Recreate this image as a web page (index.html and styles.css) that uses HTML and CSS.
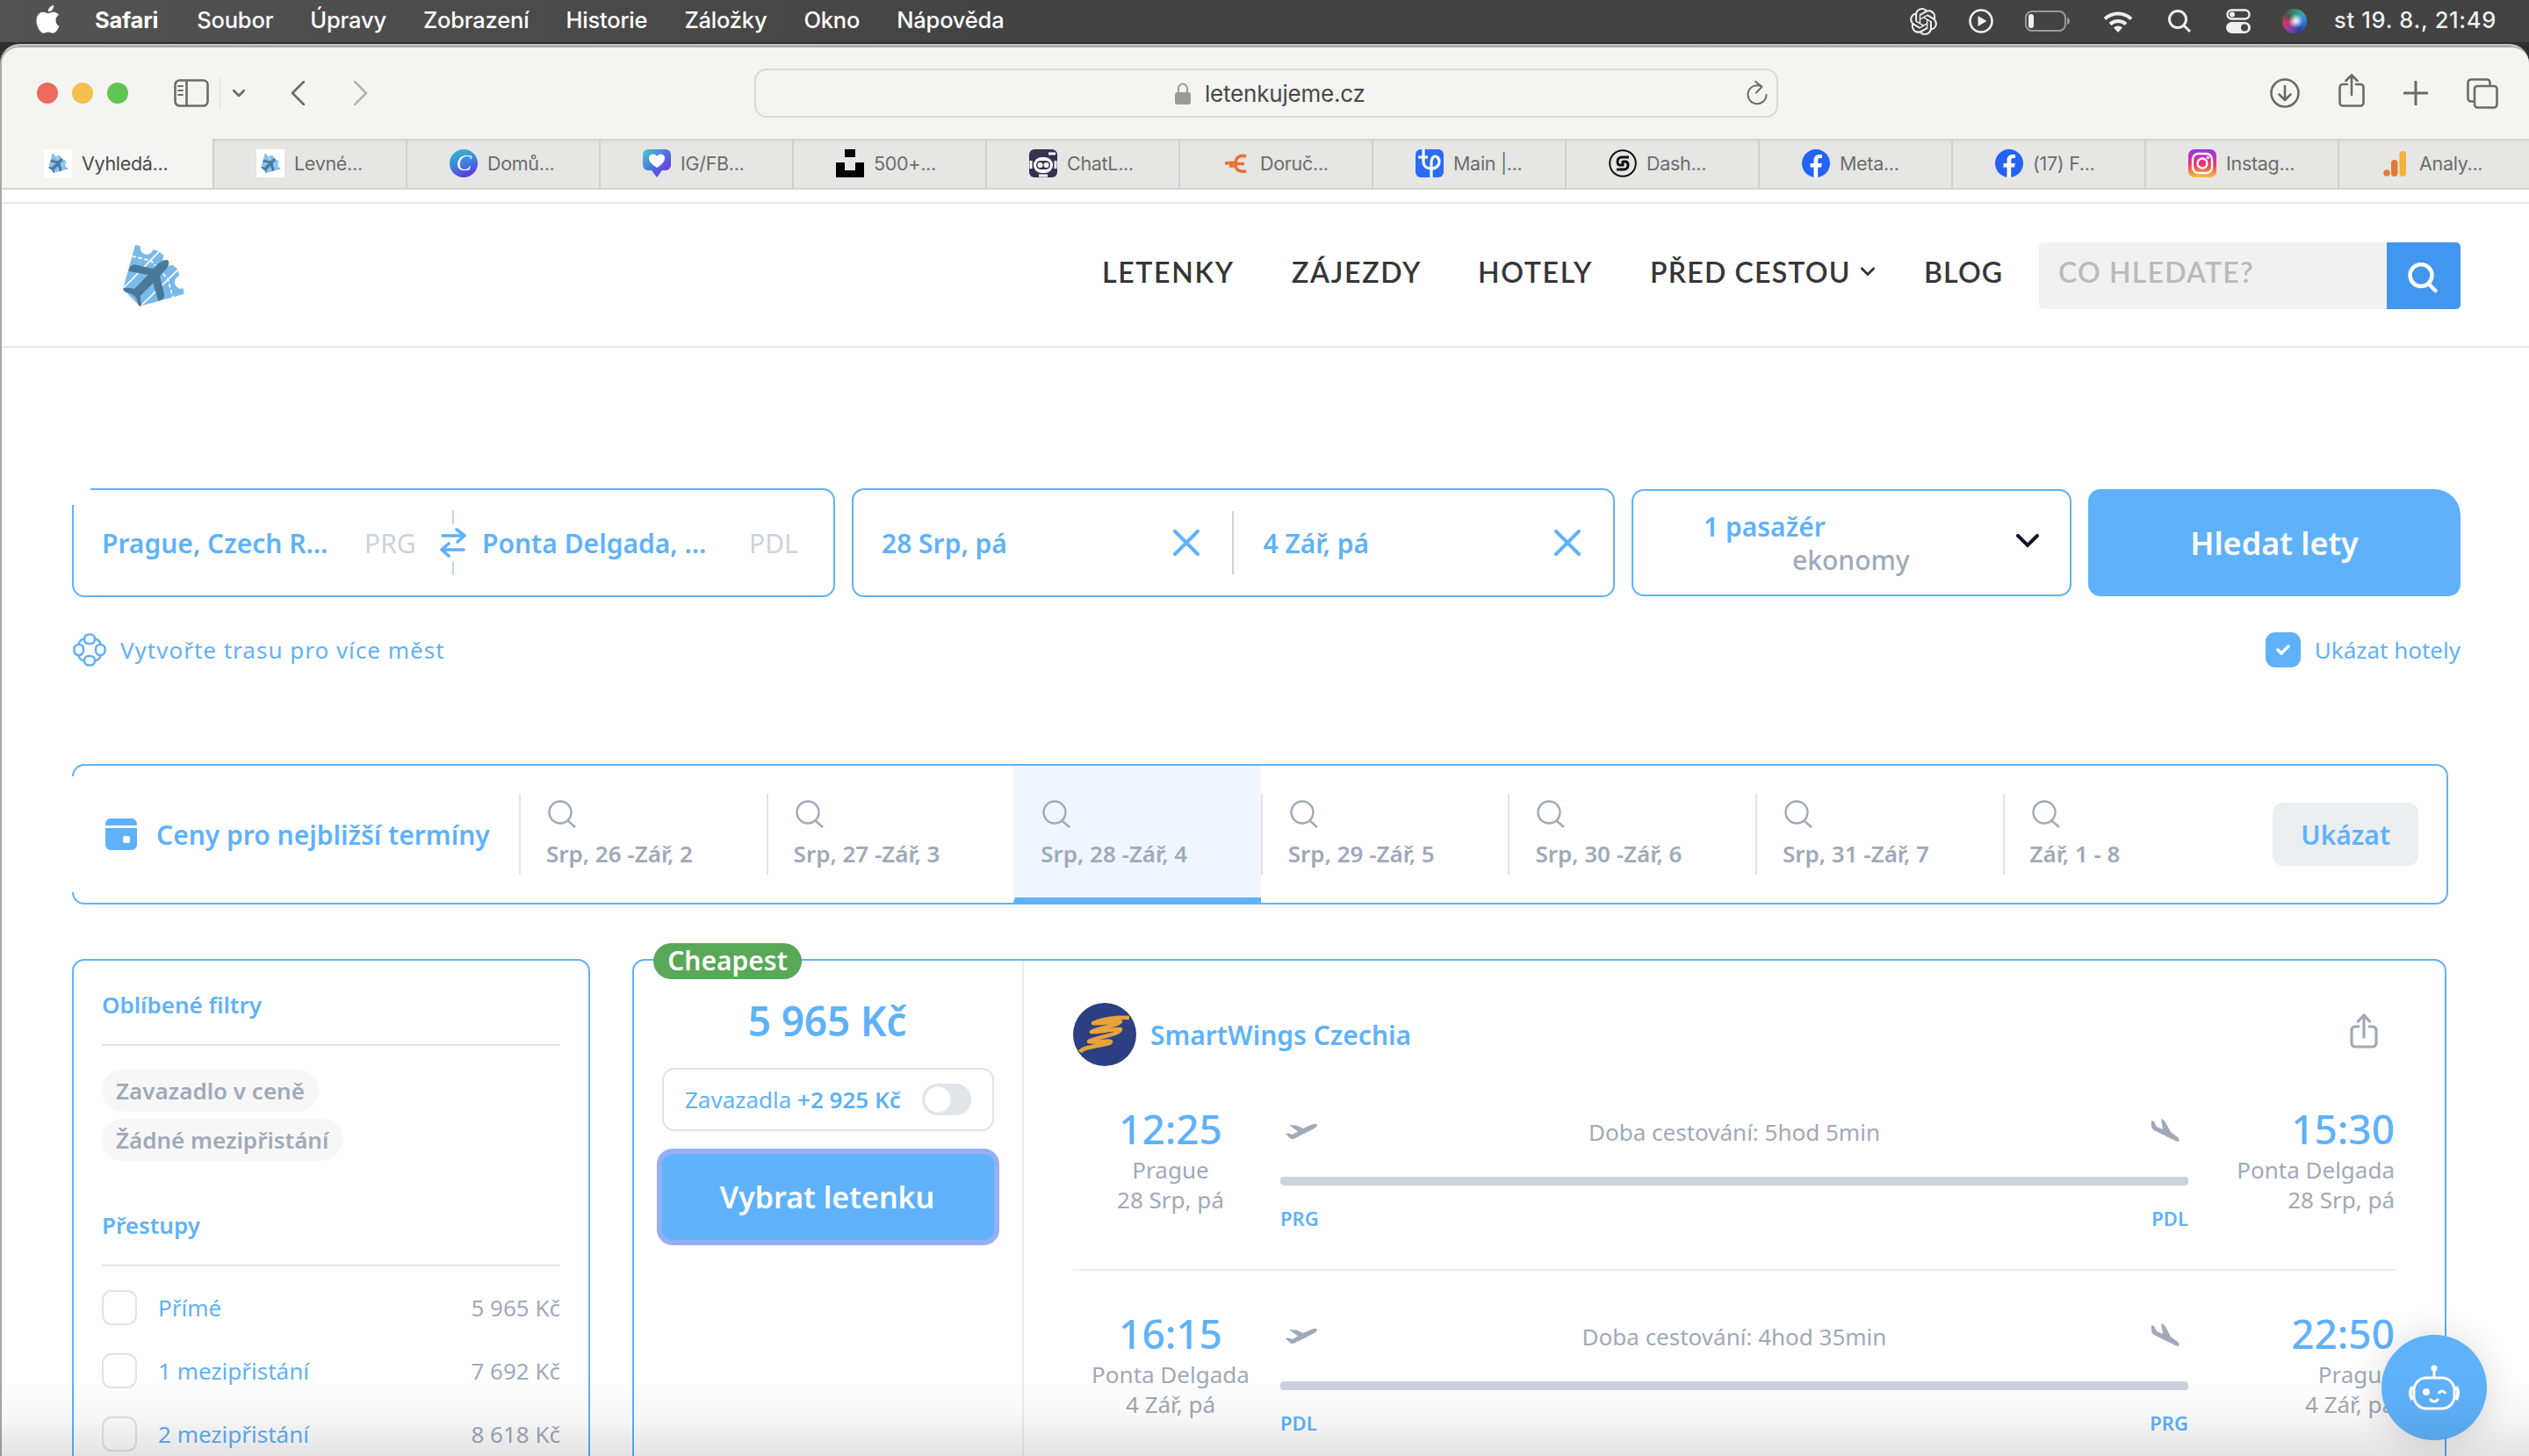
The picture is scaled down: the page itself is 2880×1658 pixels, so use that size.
FILE: index.html
```html
<!DOCTYPE html>
<html lang="cs">
<head>
    <meta charset="UTF-8">
    <title>Vyhledávání letenek</title>
    <link rel="stylesheet" href="styles.css">
</head>
<body>
    <svg class="defs">
        <symbol id="search" viewBox="0 0 32 32"><circle cx="14" cy="14" r="12.5"/><path d="M22.5 23.5 31 31"/></symbol>
        <symbol id="close" viewBox="0 0 30 30"><path d="M2 2 28 28M28 2 2 28"/></symbol>
        <symbol id="takeoff" viewBox="0 0 38 18"><path d="M5 1l8 .5 8 3.500L30 1c3-1 7-1.500 7 0 0 2-3 4-6 5.500L12 16c-3 1.500-4 1.500-6 0L1 11l3-.5 5 1.500 6-3.500z"/></symbol>
        <symbol id="landing" viewBox="0 0 34 26"><path d="M1 2l3 1 3 6 7 3L12 0l4 2 7 13 8 6c2 2 2 4 1 5-3-.5-6-2-8-3L4 13c-2-1.500-3-3-3-5z"/></symbol>
        <symbol id="facebook" viewBox="0 0 32 32"><circle cx="16" cy="16" r="16" fill="#2463f6"/><path fill="#fff" d="M13.500 32V20.500H9.500V16h4v-3c0-4.500 2.300-7 6.500-7 1.300 0 2.500.2 3 .3V10h-2c-2 0-2.800 1-2.800 2.800V16h4.600l-.8 4.500h-3.800V32z"/></symbol>
        <symbol id="ticket" viewBox="228 108 228 228">
            <path fill="#7abaea" d="M282 117l18 4a22 22 0 0 0 43 12l20 5 17 16a22 22 0 0 0 17 34l13-3 18 16 4 22a22 22 0 0 0 14 42l3 19-151 42-58-58z"/>
            <path class="lines" d="M236 270 366 137M296 330 430 200"/>
            <path class="lines dash" d="M272 155 336 171 393 232 411 296"/>
            <path fill="#4a7899" d="M240 268c0-5 12-5 22-4l18 2 46-47-66-13c0-12 8-21 20-22l63 14c16-17 32-31 48-30 10 3 6 18-2 29l-23 26 15 62c2 13-6 20-20 23l-18-61-44 44 4 33c-4 4-8 1-10-3l-8-24-13-11-26-10z"/>
        </symbol>
    </svg>

    <div class="menubar">
        <svg class="apple" viewBox="0 0 27 32"><path d="M22.500 17c0-4 3-5.500 3.500-6-2-3-5-3.300-6-3.300-2.600-.2-5 1.500-6.200 1.500S10.400 7.700 8.200 7.800C3.500 8 .5 12 .5 17.200c0 7 4.500 14.500 8.200 14.500 2 0 2.800-1.300 5.200-1.300s3.100 1.300 5.200 1.300c3.500 0 6.300-5 7.200-8-.5-.2-3.800-1.800-3.800-6.700zM18.500 5.300C19.700 3.800 20.300 2 20.200 0c-2.500.2-6.400 2.500-6.300 7.200 1.800.1 3.500-.6 4.600-1.900z"/></svg>
        <b>Safari</b>
        <span>Soubor</span>
        <span>Úpravy</span>
        <span>Zobrazení</span>
        <span>Historie</span>
        <span>Záložky</span>
        <span>Okno</span>
        <span>Nápověda</span>
        <div class="status">
            <svg class="gpt" viewBox="0 0 24 24" width="31" height="31"><path d="M22.2819 9.8211a5.9847 5.9847 0 0 0-.5157-4.9108 6.0462 6.0462 0 0 0-6.5098-2.9A6.0651 6.0651 0 0 0 4.9807 4.1818a5.9847 5.9847 0 0 0-3.9977 2.9 6.0462 6.0462 0 0 0 .7427 7.0966 5.98 5.98 0 0 0 .511 4.9107 6.051 6.051 0 0 0 6.5146 2.9001A5.9847 5.9847 0 0 0 13.2599 24a6.0557 6.0557 0 0 0 5.7718-4.2058 5.9894 5.9894 0 0 0 3.9977-2.9001 6.0557 6.0557 0 0 0-.7475-7.0729zm-9.022 12.6081a4.4755 4.4755 0 0 1-2.8764-1.0408l.1419-.0804 4.7783-2.7582a.7948.7948 0 0 0 .3927-.6813v-6.7369l2.02 1.1686a.071.071 0 0 1 .038.052v5.5826a4.504 4.504 0 0 1-4.4945 4.4944zm-9.6607-4.1254a4.4708 4.4708 0 0 1-.5346-3.0137l.142.0852 4.783 2.7582a.7712.7712 0 0 0 .7806 0l5.8428-3.3685v2.3324a.0804.0804 0 0 1-.0332.0615L9.74 19.9502a4.4992 4.4992 0 0 1-6.1408-1.6464zM2.3408 7.8956a4.485 4.485 0 0 1 2.3655-1.9728V11.6a.7664.7664 0 0 0 .3879.6765l5.8144 3.3543-2.0201 1.1685a.0757.0757 0 0 1-.071 0l-4.8303-2.7865A4.504 4.504 0 0 1 2.3408 7.872zm16.5963 3.8558L13.1038 8.364 15.1192 7.2a.0757.0757 0 0 1 .071 0l4.8303 2.7913a4.4944 4.4944 0 0 1-.6765 8.1042v-5.6772a.79.79 0 0 0-.407-.667zm2.0107-3.0231l-.142-.0852-4.7735-2.7818a.7759.7759 0 0 0-.7854 0L9.409 9.2297V6.8974a.0662.0662 0 0 1 .0284-.0615l4.8303-2.7866a4.4992 4.4992 0 0 1 6.6802 4.66zM8.3065 12.863l-2.02-1.1638a.0804.0804 0 0 1-.038-.0567V6.0742a4.4992 4.4992 0 0 1 7.3757-3.4537l-.142.0805L8.704 5.459a.7948.7948 0 0 0-.3927.6813zm1.0976-2.3654l2.602-1.4998 2.6069 1.4998v2.9994l-2.5974 1.4997-2.6067-1.4997Z"/></svg>
            <svg class="play" viewBox="0 0 28 28" width="28" height="28"><circle cx="14" cy="14" r="12.500" fill="none" stroke="#eee" stroke-width="2.600"/><path d="M10.500 8v12l10-6z"/></svg>
            <svg class="battery" viewBox="0 0 52 24" width="52" height="24"><rect x="1" y="1" width="45" height="22" rx="7" fill="none" stroke="#999" stroke-width="2"/><rect x="4" y="4" width="6" height="16" rx="3"/><path d="M48 8c4 1 4 7 0 8z" fill="#999"/></svg>
            <svg class="wifi" viewBox="0 0 34 25" width="34" height="25"><path d="M17 25l-5-5.500a7 7 0 0 1 10 0z"/><path class="arc" d="M8 15.500a13 13 0 0 1 18 0M2 9.500a21.500 21.500 0 0 1 30 0"/></svg>
            <svg class="lens" viewBox="0 0 26 26" width="26" height="26"><circle cx="11" cy="11" r="9.500"/><path d="M18 18l7 7"/></svg>
            <svg class="control" viewBox="0 0 28 28" width="28" height="28"><rect x="1.500" y="1.500" width="25" height="10" rx="5" fill="none" stroke="#eee" stroke-width="2.400"/><circle cx="7" cy="6.500" r="3"/><rect y="15" width="28" height="13" rx="6.500"/><circle cx="21" cy="21.500" r="4" fill="#444"/></svg>
            <i class="siri"></i>
            <span class="clock">st 19. 8., 21:49</span>
        </div>
    </div>

    <div class="window">
        <div class="toolbar">
            <div class="lights"><i class="red"></i><i class="yellow"></i><i class="green"></i></div>
            <svg class="tool sidebar-icon" viewBox="0 0 40 32" width="40" height="32"><rect x="1.500" y="1.500" width="37" height="29" rx="5"/><path d="M14.500 2v28"/><path stroke-width="2" d="M5 8h5M5 13h5M5 18h5"/></svg>
            <i class="sep"></i>
            <svg class="tool caret" viewBox="0 0 14 9" width="14" height="9"><path d="M1 1l6 6 6-6"/></svg>
            <svg class="tool back" viewBox="0 0 16 28" width="16" height="28"><path d="M15 1 2 14l13 13"/></svg>
            <svg class="tool forward" viewBox="0 0 16 28" width="16" height="28"><path d="M1 1l13 13L1 27"/></svg>
            <div class="address">
                <svg viewBox="0 0 18 25" width="18" height="25"><rect y="11" width="18" height="14" rx="2.500" fill="#9b9b9a"/><path d="M4 12V7a5 5.500 0 0 1 10 0v5" fill="none" stroke="#9b9b9a" stroke-width="2"/></svg>
                <span>letenkujeme.cz</span>
                <svg class="tool reload" viewBox="0 0 24 28" width="24" height="28"><path stroke-width="2" d="M22.500 16A10.500 10.500 0 1 1 17 6.500M10 .8l7.500 6L11 13.500"/></svg>
            </div>
            <div class="actions">
                <svg class="tool" viewBox="0 0 34 34" width="34" height="34"><circle cx="17" cy="17" r="15.500"/><path d="M17 9v16M10.500 18.500 17 25l6.500-6.500"/></svg>
                <svg class="tool share" viewBox="0 0 30 38" width="30" height="38"><path d="M10 12H5a3.500 3.500 0 0 0-3.500 3.500V33A3.500 3.500 0 0 0 5 36.500h20a3.500 3.500 0 0 0 3.500-3.500V15.500A3.500 3.500 0 0 0 25 12h-5M15 24V2M8.500 8 15 1.500 21.500 8"/></svg>
                <svg class="tool" viewBox="0 0 28 28" width="28" height="28"><path stroke-width="3" d="M14 1v26M1 14h26"/></svg>
                <svg class="tool" viewBox="0 0 36 35" width="36" height="35"><path d="M9 26.500H5A3.500 3.500 0 0 1 1.500 23V5A3.500 3.500 0 0 1 5 1.500h18A3.500 3.500 0 0 1 26.500 5v3"/><rect x="9" y="9" width="25.500" height="24.500" rx="3.500"/></svg>
            </div>
        </div>

        <div class="tabs">
            <div class="tab active"><svg class="favicon paper"><use href="#ticket"/></svg>Vyhledá...</div>
            <div class="tab"><svg class="favicon paper"><use href="#ticket"/></svg>Levné...</div>
            <div class="tab"><i class="favicon canva">C</i>Domů...</div>
            <div class="tab"><svg class="favicon" viewBox="0 0 32 32"><defs><linearGradient id="g1" x2="1" y2="1"><stop offset="0" stop-color="#4ad0c8"/><stop offset=".45" stop-color="#4a78e0"/><stop offset="1" stop-color="#7a20e0"/></linearGradient></defs><path fill="url(#g1)" d="M6 0h20a6 6 0 0 1 6 6v12a6 6 0 0 1-6 6h-4l-6 8-6-8H6a6 6 0 0 1-6-6V6a6 6 0 0 1 6-6z"/><path fill="#fff" d="M16 21c-6-4-9-7-9-11 0-5 7-6 9-2 2-4 9-3 9 2 0 4-3 7-9 11z"/></svg>IG/FB...</div>
            <div class="tab"><svg class="favicon" viewBox="0 0 32 32"><path d="M10 0h12v9H10zM0 15h10v9h12v-9h10v17H0z"/></svg>500+...</div>
            <div class="tab"><svg class="favicon" viewBox="0 0 32 32"><rect width="32" height="32" rx="6" fill="#343350"/><rect x="5" y="9" width="22" height="18" rx="9" fill="#fff"/><rect x="8" y="13" width="16" height="10" rx="5" fill="#343350"/><circle cx="12.500" cy="18" r="3" fill="#fff"/><circle cx="19.500" cy="18" r="3" fill="#fff"/><path d="M2 13v9M30 13v9M11 30h10M22 5h8" stroke="#fff" stroke-width="3"/></svg>ChatL...</div>
            <div class="tab"><svg class="favicon" viewBox="0 0 32 32"><path d="M27 8C20 6 16 9 15 15L3 16M14 16.500h11M8 19h7c1 5 5 7 12 6" fill="none" stroke="#ec6f35" stroke-width="3.600"/></svg>Doruč...</div>
            <div class="tab"><svg class="favicon" viewBox="0 0 32 32"><rect width="32" height="32" rx="6" fill="#2c6cf4"/><path d="M9 0v14c0 6 5 8 9 8 6 0 9-4 9-8s-3-6-5-6-4 3-4 7v17M3 9h11" fill="none" stroke="#fff" stroke-width="3.200"/></svg>Main |...</div>
            <div class="tab"><svg class="favicon" viewBox="0 0 32 32" fill="none" stroke="#111"><circle cx="16" cy="16" r="14.800" stroke-width="2"/><path stroke-width="3" stroke-linejoin="round" d="M23 9h-8c-3 0-5 2-5 5s1 4 3 4h3v-5M9 23h8c3 0 5-2 5-5s-1-4-3-4h-3"/></svg>Dash...</div>
            <div class="tab"><svg class="favicon"><use href="#facebook"/></svg>Meta...</div>
            <div class="tab"><svg class="favicon"><use href="#facebook"/></svg>(17) F...</div>
            <div class="tab"><i class="favicon insta"><svg viewBox="0 0 32 32" fill="none" stroke="#fff" stroke-width="2.400"><rect x="5" y="5" width="22" height="22" rx="6.500"/><circle cx="16" cy="16" r="5.500"/><circle cx="22.500" cy="9.500" r=".6"/></svg></i>Instag...</div>
            <div class="tab"><svg class="favicon" viewBox="0 0 32 32"><circle cx="6" cy="27" r="3.700" fill="#dd7c3a"/><rect x="11" y="12" width="7.500" height="19" rx="3.700" fill="#dd7c3a"/><rect x="20.500" y="2" width="7.500" height="29" rx="3.700" fill="#f2b03c"/></svg>Analy...</div>
        </div>

        <header class="site-header">
            <svg class="logo"><use href="#ticket"/></svg>
            <nav>
                <a class="n1">LETENKY</a>
                <a class="n2">ZÁJEZDY</a>
                <a class="n3">HOTELY</a>
                <a class="n4">PŘED CESTOU</a>
                <svg viewBox="0 0 18 12" width="18" height="12"><path d="M1.500 2 9 9.500 16.500 2"/></svg>
                <a class="n5">BLOG</a>
            </nav>
            <div class="site-search">
                <span>CO HLEDATE?</span>
                <button><svg viewBox="0 0 34 34" width="34" height="34"><circle cx="15" cy="14.500" r="12.500"/><path d="M23.500 24l8 8"/></svg></button>
            </div>
        </header>

        <main>
            <div class="search-form">
                <div class="field route">
                    <b class="city">Prague, Czech R...</b>
                    <span class="code">PRG</span>
                    <div class="swap">
                        <i></i>
                        <svg viewBox="0 0 30 34" width="30" height="34"><path d="M3 9h24M19 2l9 7-8 7M27 25H3M10 18l-8 7 8 7"/></svg>
                        <i></i>
                    </div>
                    <b class="city">Ponta Delgada, ...</b>
                    <span class="code">PDL</span>
                </div>
                <div class="field dates">
                    <div><b>28 Srp, pá</b><svg class="x"><use href="#close"/></svg></div>
                    <div><b>4 Zář, pá</b><svg class="x"><use href="#close"/></svg></div>
                </div>
                <div class="field people">
                    <div><b>1 pasažér</b><span>ekonomy</span></div>
                    <svg viewBox="0 0 26 16" width="26" height="16"><path d="M2 2l11 11L24 2"/></svg>
                </div>
                <button class="submit">Hledat lety</button>
            </div>
            <div class="form-links">
                <svg viewBox="0 0 38 38" width="38" height="38"><rect x="6.500" y="6.500" width="25" height="25" rx="7"/><g fill="#fff"><rect x="13" y="1.500" width="12" height="10.500" rx="5"/><rect x="13" y="26" width="12" height="10.500" rx="5"/><rect x="1.500" y="13" width="10.500" height="12" rx="5"/><rect x="26" y="13" width="10.500" height="12" rx="5"/></g></svg>
                <span class="multi">Vytvořte trasu pro více měst</span>
                <i class="checked"><svg viewBox="0 0 16 12" width="16" height="12"><path d="M2 6l4 4 8-8"/></svg></i>
                <span>Ukázat hotely</span>
            </div>

            <div class="near-dates">
                <div class="near-title">
                    <svg viewBox="0 0 36 36" width="36" height="36"><path d="M0 8V6a6 6 0 0 1 6-6h24a6 6 0 0 1 6 6v2zM0 11h36v19a6 6 0 0 1-6 6H6a6 6 0 0 1-6-6z"/><rect x="20" y="20" width="8" height="8" rx="2" fill="#fff"/></svg>
                    <b>Ceny pro nejbližší termíny</b>
                </div>
                <div class="date"><svg><use href="#search"/></svg>Srp, 26 -Zář, 2</div>
                <div class="date"><svg><use href="#search"/></svg>Srp, 27 -Zář, 3</div>
                <div class="date current"><svg><use href="#search"/></svg>Srp, 28 -Zář, 4</div>
                <div class="date"><svg><use href="#search"/></svg>Srp, 29 -Zář, 5</div>
                <div class="date"><svg><use href="#search"/></svg>Srp, 30 -Zář, 6</div>
                <div class="date"><svg><use href="#search"/></svg>Srp, 31 -Zář, 7</div>
                <div class="date"><svg><use href="#search"/></svg>Zář, 1 - 8</div>
                <button>Ukázat</button>
            </div>

            <div class="results">
                <aside class="filters">
                    <h3>Oblíbené filtry</h3>
                    <div class="pills">
                        <span>Zavazadlo v ceně</span>
                        <span>Žádné mezipřistání</span>
                    </div>
                    <h3>Přestupy</h3>
                    <label><i></i>Přímé<span>5 965 Kč</span></label>
                    <label><i></i>1 mezipřistání<span>7 692 Kč</span></label>
                    <label><i></i>2 mezipřistání<span>8 618 Kč</span></label>
                </aside>

                <div class="ticket">
                    <span class="badge">Cheapest</span>
                    <div class="buy">
                        <div class="price">5 965 Kč</div>
                        <div class="baggage"><span>Zavazadla <b>+2 925 Kč</b></span><i class="toggle"></i></div>
                        <button>Vybrat letenku</button>
                    </div>
                    <div class="flights">
                        <div class="airline">
                            <svg viewBox="0 0 72 72" width="72" height="72"><circle cx="36" cy="36" r="36" fill="#2b3f82"/><path d="M8 56c3-5 14-6 24-8 6-1 11-2 11-4-4-2-14 2-25 0 8-5 36-8 36-14-8-1-22 4-33 3 6-5 30-6 33-12-8 0-22 3-31 2 10-4 26-7 41-6" fill="none" stroke="#e8a33c" stroke-width="4.500" stroke-linejoin="round"/></svg>
                            <b>SmartWings Czechia</b>
                            <svg class="share" viewBox="0 0 32 40" width="32" height="40"><path d="M10 15H6a4 4 0 0 0-4 4v15a4 4 0 0 0 4 4h20a4 4 0 0 0 4-4V19a4 4 0 0 0-4-4h-4M16 27V3M9.500 9 16 2l6.500 7"/></svg>
                        </div>
                        <div class="leg">
                            <div class="from"><b>12:25</b><span>Prague</span><span>28 Srp, pá</span></div>
                            <div class="track">
                                <div class="info"><svg class="up"><use href="#takeoff"/></svg>Doba cestování: 5hod 5min<svg class="down"><use href="#landing"/></svg></div>
                                <div class="line"></div>
                                <div class="codes"><b>PRG</b><b>PDL</b></div>
                            </div>
                            <div class="to"><b>15:30</b><span>Ponta Delgada</span><span>28 Srp, pá</span></div>
                        </div>
                        <div class="leg">
                            <div class="from"><b>16:15</b><span>Ponta Delgada</span><span>4 Zář, pá</span></div>
                            <div class="track">
                                <div class="info"><svg class="up"><use href="#takeoff"/></svg>Doba cestování: 4hod 35min<svg class="down"><use href="#landing"/></svg></div>
                                <div class="line"></div>
                                <div class="codes"><b>PDL</b><b>PRG</b></div>
                            </div>
                            <div class="to"><b>22:50</b><span>Prague</span><span>4 Zář, pá</span></div>
                        </div>
                    </div>
                </div>
            </div>
        </main>
    </div>

    <div class="chat">
        <svg viewBox="0 0 58 52" width="58" height="52" fill="none" stroke="#fff" stroke-width="3"><rect x="6" y="15" width="46" height="35" rx="14"/><path d="M29 15V6M24 39q5 6 10 0M34 33q4-6 8 0"/><circle cx="29" cy="4" r="3.500" fill="#fff" stroke="none"/><circle cx="20" cy="31" r="4" fill="#fff" stroke="none"/><path d="M4 25q-4 7 0 15M54 25q4 7 0 15" stroke-width="4"/></svg>
    </div>
    <div class="bottom-fade"></div>
</body>
</html>
```
FILE: styles.css
```css
* {
    box-sizing: border-box;
}
body {
    margin: 0;
    height: 1658px;
    overflow: hidden;
    background: #2e2e2e;
    font-family: "Noto Sans", sans-serif;
    font-size: 26px;
    color: #5fb2fa;
}
svg {
    display: block;
    flex: none;
}
button {
    border: 0;
    padding: 0;
    font-family: inherit;
}
b {
    font-weight: 600;
}
.defs {
    position: absolute;
    width: 0;
    height: 0;
}

/* menu bar */
.menubar {
    display: flex;
    align-items: center;
    height: 48px;
    padding-left: 41px;
    padding-right: 38px;
    gap: 42px;
    background: linear-gradient(to right, #535353, #434343 40%, #424242);
    font-family: "Inter", sans-serif;
    font-size: 25.500px;
    font-weight: 500;
    letter-spacing: -0.2px;
    line-height: 46px;
    color: #fff;
    white-space: nowrap;
}
.menubar .apple {
    width: 27px;
    height: 32px;
    margin-right: -2px;
    margin-top: -4px;
    fill: #fff;
}
.menubar b {
    margin-right: 2px;
    font-weight: 700;
}
.menubar b,
.menubar span {
    height: 48px;
}
.status {
    display: flex;
    align-items: center;
    margin-left: auto;
    fill: #eee;
}
.gpt {
    margin-right: 36px;
}
.play {
    margin-right: 36px;
}
.battery {
    margin-right: 37px;
}
.wifi {
    margin-right: 40px;
}
.wifi .arc {
    fill: none;
    stroke: #eee;
    stroke-width: 4;
}
.lens {
    fill: none;
    stroke: #eee;
    stroke-width: 3;
    margin-right: 40px;
}
.control {
    margin-right: 36px;
}
.siri {
    width: 28px;
    height: 28px;
    border-radius: 50%;
    margin-right: 31px;
    background: radial-gradient(circle at 55% 50%, #fff 0, rgba(255, 255, 255, 0) 40%), conic-gradient(#2f8f6a, #3aa0c0, #2f6fd8, #2a3f9c, #8a3fb0, #d0355f, #5a4a50, #2f8f6a);
}
.clock {
    width: 184px;
    letter-spacing: 0.7px;
    color: #eee;
}

/* browser window */
.window {
    margin-top: 2px;
    height: 1620px;
    border-left: 2px solid #a8a8a8;
    border-top: 2px solid #c4c4c4;
    border-radius: 22px 22px 0 0;
    overflow: hidden;
    background: #fff;
}
.toolbar {
    display: flex;
    align-items: center;
    height: 106px;
    padding-left: 40px;
    border-top: 2px solid #a5a5a5;
    border-radius: 20px 20px 0 0;
    background: #f4f4f2;
}
.lights {
    display: flex;
    gap: 16px;
    margin-right: 52px;
}
.lights i {
    width: 24px;
    height: 24px;
    border-radius: 50%;
}
.lights .red {
    background: #ed6a5e;
}
.lights .yellow {
    background: #f5bf4f;
}
.lights .green {
    background: #61c554;
}
.tool {
    fill: none;
    stroke: #6b6b69;
    stroke-width: 2.600;
    stroke-linecap: round;
    stroke-linejoin: round;
}
.sep {
    width: 1px;
    height: 36px;
    margin: 0 14px 0 12px;
    background: #dcdcda;
}
.back {
    margin: 0 56px 0 52px;
}
.forward {
    margin-right: 440px;
    stroke: #b5b5b3;
}
.address {
    display: flex;
    align-items: center;
    width: 1166px;
    height: 56px;
    padding-left: 477px;
    padding-right: 10px;
    gap: 16px;
    border: 2px solid #d9d9d7;
    border-radius: 14px;
    font-family: "Inter", sans-serif;
    font-size: 26px;
    letter-spacing: -0.2px;
    color: #494949;
}
.reload {
    margin-left: auto;
}
.actions {
    display: flex;
    align-items: center;
    gap: 44px;
    margin-left: 560px;
}
.actions .share {
    margin-top: -6px;
}
.tabs {
    display: flex;
    height: 58px;
    border-bottom: 2px solid #d4d4d3;
}
.tab {
    flex: none;
    display: flex;
    align-items: center;
    gap: 11px;
    width: 220px;
    padding-left: 48px;
    border-left: 2px solid #cfcfce;
    background: linear-gradient(#cfcfce, #e6e6e4 5px);
    font-family: "Inter", sans-serif;
    font-size: 21.500px;
    letter-spacing: -0.3px;
    color: #6d6d6c;
    white-space: nowrap;
}
.tab.active {
    width: 240px;
    border: 0;
    background: #f4f4f2;
    color: #4a4a4a;
}
.favicon {
    flex: none;
    width: 32px;
    height: 32px;
}
.paper {
    padding: 4px;
    background: #fff;
}
.canva {
    border-radius: 50%;
    background: linear-gradient(160deg, #35c2cd, #3f7fe0 50%, #6a22e2);
    color: #fff;
    font: italic 26px/31px "Liberation Serif", serif;
    text-align: center;
}
.insta {
    border-radius: 7px;
    background: linear-gradient(to top, #fbc23c, #ee3a5c 45%, #c62fb8 75%, #8a3be8);
}

/* site header */
.site-header {
    display: flex;
    align-items: center;
    height: 166px;
    margin-top: 14px;
    padding-left: 134px;
    border-top: 2px solid #e8e8e8;
    border-bottom: 2px solid #e8e8e8;
}
.lines {
    fill: none;
    stroke: #fff;
    stroke-width: 5;
}
.dash {
    stroke-dasharray: 13 8;
}
.logo {
    width: 76px;
    height: 76px;
    margin-top: 2px;
}
nav {
    display: flex;
    align-items: center;
    width: 1110px;
    margin-left: 1043px;
    margin-top: -8px;
    font-family: "Lato", sans-serif;
    font-size: 32px;
    font-weight: 600;
    letter-spacing: 1.700px;
    color: #363636;
    white-space: nowrap;
}
.n1 {
    width: 216px;
}
.n2 {
    width: 212px;
}
.n3 {
    width: 196px;
}
.n4 {
    width: 239px;
    letter-spacing: 1.200px;
}
nav svg {
    fill: none;
    stroke: #363636;
    stroke-width: 2.800;
    margin-right: 55px;
}
.n5 {
    letter-spacing: 1.200px;
}
.site-search {
    display: flex;
    width: 480px;
    height: 76px;
    margin-left: -43px;
    margin-top: 2px;
    border-radius: 5px;
    overflow: hidden;
    background: #f1f1f1;
}
.site-search span {
    flex: 1;
    padding-left: 22px;
    font-family: "Lato", sans-serif;
    font-size: 32px;
    font-weight: 600;
    letter-spacing: 1.200px;
    line-height: 68px;
    color: #bababa;
}
.site-search button {
    display: flex;
    align-items: center;
    justify-content: center;
    width: 84px;
    background: #4196f0;
}
.site-search svg {
    fill: none;
    stroke: #fff;
    stroke-width: 4.500;
    stroke-linecap: round;
    margin-top: 4px;
    margin-right: 2px;
}

/* search form */
main {
    padding: 160px 0 0 80px;
}
.search-form {
    display: flex;
    align-items: center;
    gap: 19px;
    font-size: 30px;
}
.field {
    display: flex;
    align-items: center;
    height: 124px;
    border: 2px solid #5fb2fa;
    border-radius: 14px;
    white-space: nowrap;
}
.route {
    position: relative;
    width: 869px;
    padding-left: 32px;
}
/* the corner of the route field stays open */
.route::before {
    content: "";
    position: absolute;
    left: -2px;
    top: -2px;
    width: 21px;
    height: 19px;
    background: #fff;
}
.city {
    width: 299px;
}
.code {
    width: 86px;
    font-weight: 400;
    color: #cdd3dd;
}
.swap {
    display: flex;
    flex-direction: column;
    align-items: center;
    gap: 4px;
    width: 30px;
    margin-right: 18px;
}
.swap + .city {
    width: 304px;
}
.swap i {
    width: 2px;
    height: 16px;
    background: #cdd3dd;
}
.swap svg {
    fill: none;
    stroke: #5fb2fa;
    stroke-width: 3.600;
    stroke-linecap: round;
    stroke-linejoin: round;
}
.dates {
    width: 869px;
}
.dates div {
    display: flex;
    align-items: center;
    justify-content: space-between;
    width: 434px;
    height: 72px;
    padding: 0 37px 0 32px;
}
.dates div:first-child {
    border-right: 2px solid #cdd3dd;
}
.dates div:last-child {
    padding-left: 34px;
}
.x {
    width: 30px;
    height: 30px;
    stroke: #5fb2fa;
    stroke-width: 4;
    stroke-linecap: round;
}
.people {
    width: 501px;
    height: 122px;
    padding-left: 80px;
}
.people div {
    display: flex;
    flex-direction: column;
    width: 356px;
    padding-top: 2px;
    line-height: 38px;
}
.people span {
    padding-left: 101px;
    font-weight: 500;
    color: #a0aab8;
}
.people svg {
    fill: none;
    stroke: #111827;
    stroke-width: 4;
    stroke-linecap: round;
    margin-top: -5px;
}
.submit {
    width: 424px;
    height: 122px;
    border-radius: 14px 30px 14px 14px;
    background: #5fb2fa;
    color: #fff;
    font-size: 36px;
    font-weight: 600;
}
.form-links {
    display: flex;
    align-items: center;
    width: 2720px;
    height: 40px;
    margin-top: 40px;
}
.form-links > svg {
    margin-left: 1px;
    margin-right: 16px;
    fill: none;
    stroke: #5fb2fa;
    stroke-width: 2.600;
}
.multi {
    letter-spacing: 1px;
}
.checked {
    display: flex;
    align-items: center;
    justify-content: center;
    width: 40px;
    height: 40px;
    margin-left: auto;
    margin-right: 16px;
    border-radius: 11px;
    background: #5fb2fa;
}
.checked svg {
    fill: none;
    stroke: #fff;
    stroke-width: 3.500;
    stroke-linecap: round;
}

/* prices for the nearest dates */
.near-dates {
    position: relative;
    display: flex;
    align-items: center;
    width: 2706px;
    height: 160px;
    margin-top: 110px;
    border: 2px solid #5fb2fa;
    border-radius: 14px;
}
/* only the corners are drawn on the left side */
.near-dates::before {
    content: "";
    position: absolute;
    left: -2px;
    top: 12px;
    bottom: 12px;
    width: 3px;
    background: #fff;
}
.near-title {
    display: flex;
    align-items: center;
    gap: 22px;
    width: 507px;
    padding-left: 36px;
    font-size: 30px;
    fill: #5fb2fa;
    white-space: nowrap;
}
.date {
    display: flex;
    flex-direction: column;
    justify-content: center;
    gap: 11px;
    width: 281.600px;
    height: 92px;
    padding-left: 29px;
    border-left: 2px solid #e1e4ea;
    font-weight: 600;
    line-height: 36px;
    color: #a0aab8;
    white-space: nowrap;
}
.date svg {
    width: 32px;
    height: 32px;
    margin-left: 2px;
    fill: none;
    stroke: #a0aab8;
    stroke-width: 2.400;
}
.current {
    height: 156px;
    padding-top: 6px;
    border-left-color: #eff6fe;
    border-bottom: 6px solid #5fb2fa;
    background: #eff6fe;
}
.near-dates button {
    width: 166px;
    height: 72px;
    margin-left: 26px;
    border-radius: 12px;
    background: #eceef0;
    color: #5fb2fa;
    font-size: 30px;
    font-weight: 600;
}

/* filters */
.results {
    display: flex;
    gap: 48px;
    margin-top: 62px;
}
.filters {
    width: 590px;
    height: 700px;
    padding: 23px 32px 0;
    border: 2px solid #5fb2fa;
    border-radius: 14px;
    font-size: 26px;
}
.filters h3 {
    height: 74px;
    margin: 0 0 27px;
    border-bottom: 2px solid #e1e5eb;
    font-size: 26px;
    font-weight: 600;
    line-height: 54px;
}
.pills {
    display: flex;
    flex-direction: column;
    align-items: flex-start;
    gap: 8px;
    margin-bottom: 46px;
}
.pills span {
    padding: 0 16px;
    border-radius: 24px;
    background: #f7f7f8;
    font-weight: 600;
    line-height: 48px;
    color: #a0aab8;
}
.filters label {
    display: flex;
    align-items: center;
    height: 40px;
    margin-bottom: 32px;
}
.filters label i {
    width: 40px;
    height: 40px;
    margin-right: 24px;
    border: 2px solid #e2e2e8;
    border-radius: 11px;
}
.filters label span {
    margin-left: auto;
    color: #a0aab8;
}

/* offer */
.ticket {
    position: relative;
    display: flex;
    width: 2066px;
    height: 700px;
    border: 2px solid #5fb2fa;
    border-radius: 14px;
}
.badge {
    position: absolute;
    left: 22px;
    top: -20px;
    width: 169px;
    height: 41px;
    border-radius: 21px;
    background: #58a858;
    color: #fff;
    font-size: 30px;
    font-weight: 600;
    line-height: 39px;
    text-align: center;
}
.buy {
    width: 444px;
    padding: 34px 32px 0;
    border-right: 2px solid #eee;
}
.price {
    height: 88px;
    margin-right: 2px;
    font-size: 46px;
    font-weight: 600;
    letter-spacing: -0.2px;
    line-height: 68px;
    text-align: center;
}
.baggage {
    display: flex;
    align-items: center;
    justify-content: space-between;
    height: 72px;
    padding: 0 24px;
    border: 2px solid #e3e3e5;
    border-radius: 14px;
    white-space: nowrap;
}
.toggle {
    width: 56px;
    height: 36px;
    border-radius: 18px;
    background: radial-gradient(circle at 18px 18px, #fff 14px, #e2e4e9 15px);
}
.buy button {
    width: 378px;
    height: 98px;
    margin-top: 26px;
    padding-right: 2px;
    border-radius: 12px;
    background: #5fb2fa;
    box-shadow: 0 0 0 6px #95aff5;
    color: #fff;
    font-size: 34px;
    font-weight: 600;
}
.flights {
    width: 1562px;
    padding: 48px 0 0 56px;
}
.airline {
    display: flex;
    align-items: center;
    gap: 16px;
    height: 72px;
    font-size: 30px;
}
.airline .share {
    margin-left: auto;
    margin-right: 20px;
    margin-top: -8px;
    fill: none;
    stroke: #a0aab8;
    stroke-width: 3.200;
    stroke-linecap: round;
}
.leg {
    display: flex;
    height: 231px;
    padding-top: 41px;
}
.leg + .leg {
    height: 233px;
    border-top: 2px solid #eee;
}
.from, .to {
    display: flex;
    flex-direction: column;
    width: 222px;
    margin-right: 14px;
    line-height: 34px;
    text-align: center;
    color: #a0aab8;
    white-space: nowrap;
}
.to {
    width: 235px;
    margin: 0;
    text-align: right;
}
.from b, .to b {
    font-size: 46px;
    font-weight: 500;
    line-height: 60px;
    color: #5fb2fa;
}
.track {
    width: 1034px;
    padding-top: 16px;
}
.info {
    display: flex;
    align-items: center;
    justify-content: space-between;
    height: 36px;
    padding: 0 9px 0 5px;
    color: #a0aab8;
    fill: #a0aab8;
}
.up {
    width: 38px;
    height: 18px;
}
.down {
    width: 34px;
    height: 26px;
    margin-top: -4px;
}
.line {
    height: 10px;
    margin-top: 33px;
    border-radius: 4px;
    background: #ccd3de;
}
.codes {
    display: flex;
    justify-content: space-between;
    margin-top: 21px;
    font-size: 22px;
    line-height: 32px;
}

/* chat button and dock shade lie over the page */
.chat {
    position: fixed;
    left: 2712px;
    top: 1520px;
    display: flex;
    align-items: center;
    justify-content: center;
    width: 120px;
    height: 120px;
    border-radius: 50%;
    background: #5fb2fa;
    box-shadow: 0 2px 40px rgba(0, 0, 0, 0.16);
}
.bottom-fade {
    position: fixed;
    left: 0;
    right: 0;
    bottom: 0;
    height: 90px;
    background: linear-gradient(rgba(0, 0, 0, 0), rgba(0, 0, 0, 0.03) 50%, rgba(0, 0, 0, 0.11));
}
```
